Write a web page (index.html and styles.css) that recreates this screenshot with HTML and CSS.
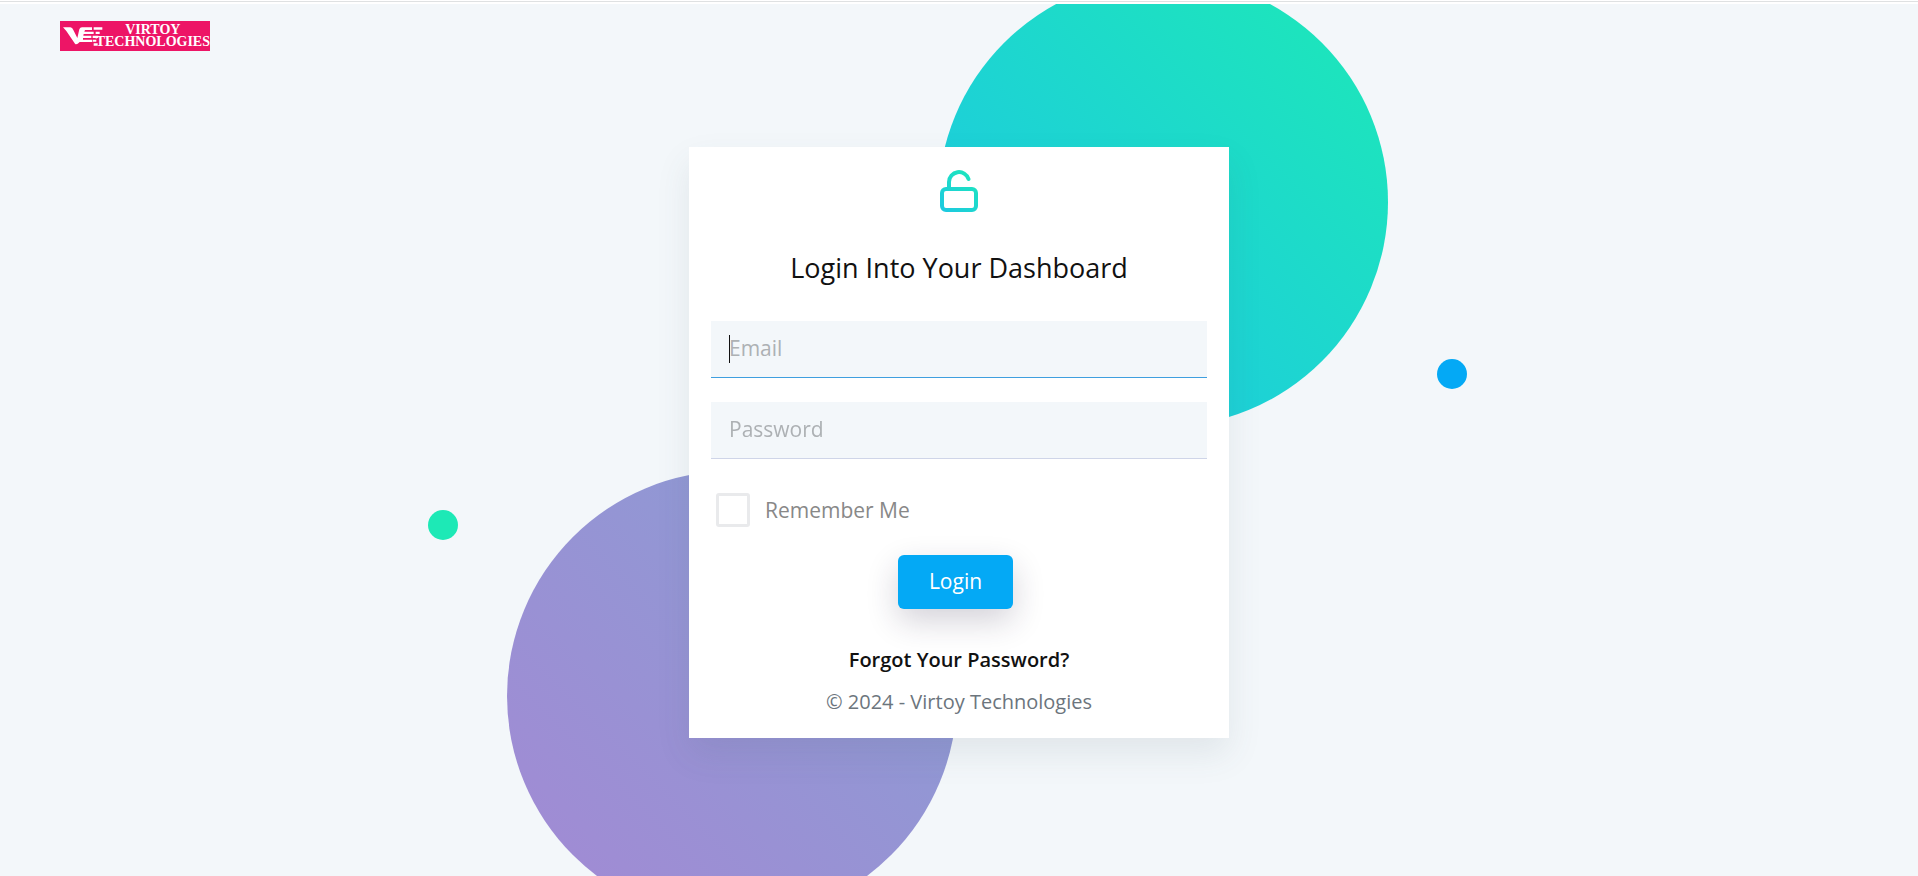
FILE: index.html
```html
<!DOCTYPE html>
<html lang="en">
<head>
    <meta charset="UTF-8">
    <meta name="viewport" content="width=device-width, initial-scale=1.0">
    <title>Login</title>
    <link rel="stylesheet" href="styles.css">
</head>
<body>
    <div class="wrapper">
        <header class="topbar">
            <a class="brand" href="#" aria-label="Virtoy Technologies">
                <svg class="brand-mark" viewBox="0 0 120 57" aria-hidden="true">
                    <path d="M0 1h22q6 0 9 8l12 24 6-26q2-6 8-6h30v8H66l-2 5h28v7H62l-1 5h24v7H60v5h28v7H50Q40 56 36 50L10 12Z"/>
                    <path d="M92 1h26v7H92zM98 14h12v7H98zM89 26h17v7H89zM90 38h10v6H90zM92 49h12v7H92z"/>
                </svg>
                <span class="brand-text">VIRTOY<br>TECHNOLOGIES</span>
            </a>
        </header>
        <main class="page">
            <div class="login">
                <span class="circle circle-green"></span>
                <span class="circle circle-purple"></span>
                <span class="circle dot-green"></span>
                <span class="circle dot-blue"></span>
                <form class="card">
                    <svg class="lock" viewBox="0 0 38 42" aria-hidden="true">
                        <defs>
                            <linearGradient id="lockFill" gradientUnits="userSpaceOnUse" x1="4" y1="42" x2="34" y2="6">
                                <stop offset="0" stop-color="#1dc9e0"/>
                                <stop offset="1" stop-color="#1de5be"/>
                            </linearGradient>
                        </defs>
                        <rect x="2" y="19" width="34" height="21" rx="4"/>
                        <path d="M9 19v-7a10 10 0 0 1 19.5-3"/>
                    </svg>
                    <h1 class="title">Login Into Your Dashboard</h1>
                    <div class="group">
                        <input class="field" type="email" placeholder="Email" aria-label="Email" autofocus>
                    </div>
                    <div class="group">
                        <input class="field" type="password" placeholder="Password" aria-label="Password">
                    </div>
                    <label class="remember"><input type="checkbox">Remember Me</label>
                    <button class="btn" type="submit">Login</button>
                    <a class="forgot" href="#">Forgot Your Password?</a>
                    <p class="copy">© 2024 - Virtoy Technologies</p>
                </form>
            </div>
        </main>
    </div>
</body>
</html>
```

FILE: styles.css
```css
* {
    margin: 0;
    padding: 0;
    box-sizing: border-box;
}
body {
    display: flex;
    flex-direction: column;
    height: 100vh;
    background-color: #fff;
    border-top: 1px solid #fff;
    font-family: "Open Sans", sans-serif;
    color: #111;
}
body::before {
    content: "";
    flex: none;
    height: 2px;
    border-top: 1px solid #dfe1e2;
}
.wrapper {
    flex: 1;
    min-height: 0;
    overflow: hidden;
    background-color: #f3f7fa;
}
.topbar {
    padding: 17px 60px 0;
}
.brand {
    width: 150px;
    height: 30px;
    display: flex;
    align-items: center;
    justify-content: space-between;
    padding-left: 3px;
    background-color: #ed1566;
    color: #fff;
    text-decoration: none;
}
.brand-mark {
    flex: none;
    width: 40px;
    height: 19px;
    margin-right: -8px;
    fill: #fff;
}
.brand-text {
    font-family: "Liberation Serif", serif;
    font-size: 14px;
    font-weight: 700;
    line-height: 12px;
    text-align: center;
}
.page {
    display: flex;
    justify-content: center;
    align-items: flex-start;
    padding: 96px 16px;
}
.login {
    position: relative;
    width: 100%;
    max-width: 540px;
}
/* decorative circles behind the card */
.circle {
    position: absolute;
    border-radius: 50%;
}
.circle-green {
    width: 450px;
    height: 450px;
    top: -170px;
    right: -159px;
    background: linear-gradient(45deg, #1dc8e3 10%, #1de9b6);
}
.circle-purple {
    width: 450px;
    height: 450px;
    left: -182px;
    bottom: -183px;
    background: linear-gradient(45deg, #a389d4, #899ed4);
}
.dot-green {
    width: 30px;
    height: 30px;
    left: -261px;
    top: 363px;
    background-color: #1de9b6;
}
.dot-blue {
    width: 30px;
    height: 30px;
    right: -238px;
    top: 212px;
    background-color: #04a9f5;
}
.card {
    position: relative;
    display: flex;
    flex-direction: column;
    align-items: center;
    padding: 23px 22px 22px;
    background-color: #fff;
    box-shadow: 0 16px 32px rgba(69, 90, 100, 0.1);
}
.lock {
    width: 38px;
    height: 42px;
    fill: none;
    stroke: url(#lockFill);
    stroke-width: 4;
    stroke-linecap: round;
    margin-bottom: 36px;
}
.title {
    font-size: 27px;
    font-weight: 400;
    line-height: 40px;
    margin-bottom: 33px;
}
.group {
    position: relative;
    width: 100%;
    margin-bottom: 24px;
}
/* text cursor of the focused field */
.group:focus-within::after {
    content: "";
    position: absolute;
    left: 18px;
    top: 14px;
    width: 1px;
    height: 28px;
    background-color: #111;
}
.group:has(.field:not(:placeholder-shown))::after {
    display: none;
}
.field {
    display: block;
    width: 100%;
    height: 57px;
    padding: 0 18px 2px;
    border: none;
    border-bottom: 1px solid #cfd5e8;
    background-color: #f3f7fa;
    color: #111;
    font-family: inherit;
    font-size: 21px;
    outline: none;
}
.field:placeholder-shown {
    caret-color: transparent;
}
.field:focus {
    border-bottom-color: #3f9fdf;
}
.field::placeholder {
    color: #adb1b4;
}
.remember {
    align-self: flex-start;
    display: flex;
    align-items: center;
    gap: 15px;
    margin: 10px 5px 28px;
    font-size: 21px;
    line-height: 34px;
    color: #888;
}
.remember input {
    appearance: none;
    width: 34px;
    height: 34px;
    border: 3px solid #e9eaec;
    border-radius: 3px;
}
.btn {
    height: 54px;
    padding: 0 31px 2px;
    margin-right: 7px;
    border: none;
    border-radius: 6px;
    background-color: #04a9f5;
    box-shadow: 0 12px 32px rgba(41, 32, 63, 0.2);
    color: #fff;
    font-family: inherit;
    font-size: 21px;
    font-weight: 500;
    cursor: pointer;
}
.forgot {
    margin: 37px 0 14px;
    font-size: 20px;
    font-weight: 600;
    line-height: 28px;
    color: #111;
    text-decoration: none;
}
.copy {
    font-size: 20px;
    line-height: 28px;
    color: #6c757d;
}
```
